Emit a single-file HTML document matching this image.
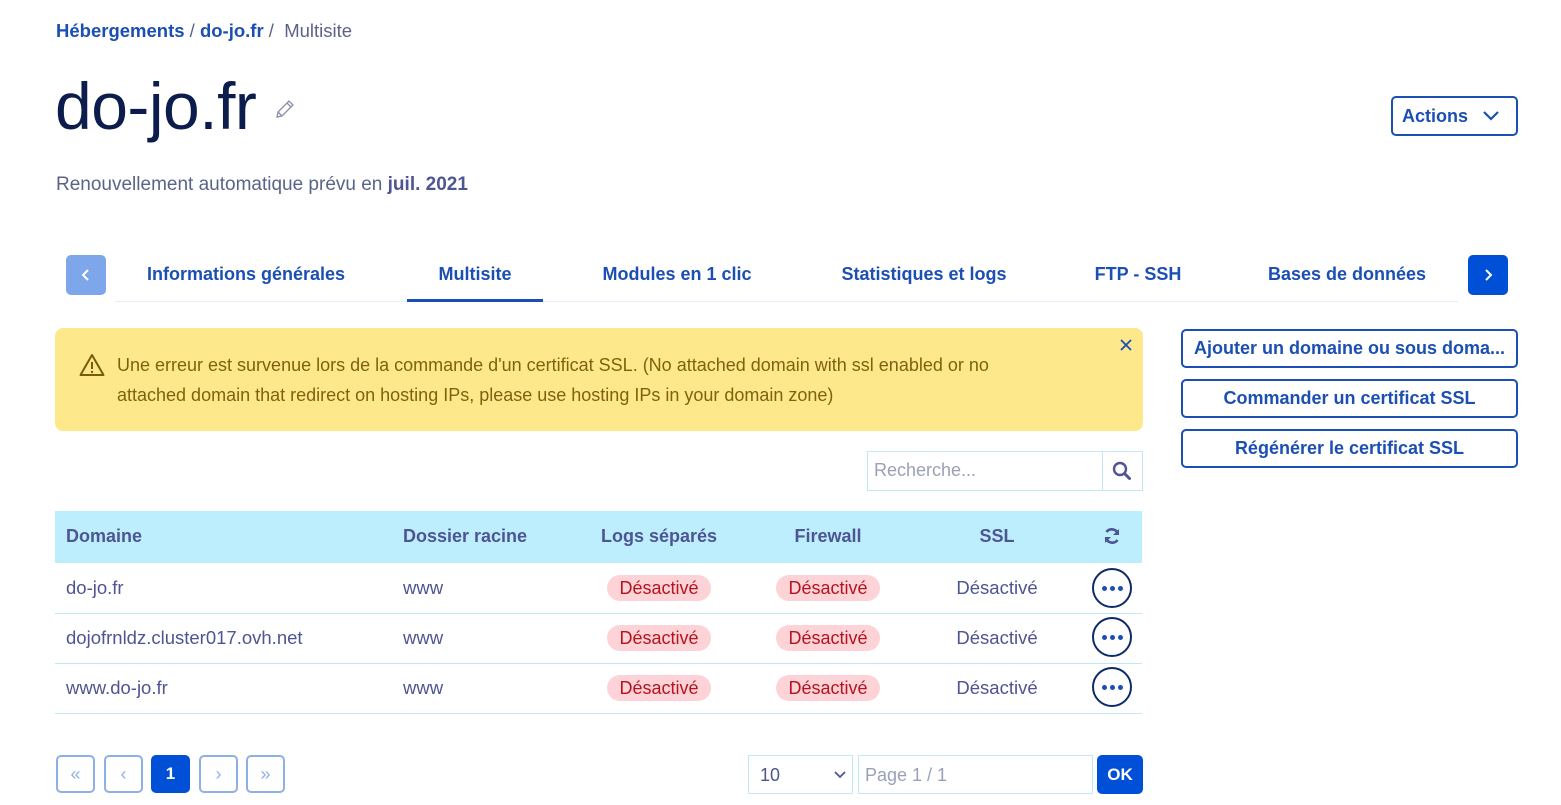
<!DOCTYPE html>
<html><head><meta charset="utf-8"><style>
*{box-sizing:border-box;margin:0;padding:0}
body{width:1561px;height:805px;overflow:hidden;background:#fff;font-family:"Liberation Sans",sans-serif;position:relative;color:#4d5592}
.a{position:absolute}
.bc{left:56px;top:20px;font-size:18.5px;color:#5a6486}
.bc b{color:#1b4fb4}
.title{left:55px;top:68px;font-size:66px;color:#0c1d4d;letter-spacing:-0.5px}
.ren{left:56px;top:174px;font-size:19px;color:#5a6486}
.ren b{color:#4d5592}
.btn{border:2px solid #1b4fb4;border-radius:5px;color:#1b4fb4;font-weight:bold;font-size:18px;display:flex;align-items:center;justify-content:center;background:#fff;white-space:nowrap}
.tab{top:264px;font-size:18px;font-weight:bold;color:#1b4fb4;text-align:center}
.hdr{font-weight:bold;font-size:18px;color:#4d5592;top:526px}
.cell{font-size:18.5px;color:#4d5592}
.badge{background:#fdd3d8;color:#b5141e;border-radius:13px;width:104px;height:26px;font-size:18px;display:flex;align-items:center;justify-content:center}
.row{left:55px;width:1087px;height:1px;background:#c3e8f5}
.dots{width:40px;height:40px;border:2px solid #0d2a6b;border-radius:50%;display:flex;align-items:center;justify-content:center;gap:3px}
.dots i{width:5px;height:5px;border-radius:50%;background:#1b4fb4;display:block}
.pg{top:755px;width:39px;height:38px;border:2px solid #8fb0e6;border-radius:5px;color:#8fb0e6;display:flex;align-items:center;justify-content:center;font-size:18px}
</style></head><body>
<div class="a bc"><b>Hébergements</b> / <b>do-jo.fr</b> /&nbsp; Multisite</div>
<div class="a title">do-jo.fr</div>
<svg class="a" style="left:274px;top:98px" width="22" height="22" viewBox="0 0 22 22"><path d="M3 19l1-5L15 3l4 4L8 18z M4 14l4 4 M13 5l4 4" fill="none" stroke="#8a8fa8" stroke-width="1.3"/></svg>
<div class="a ren">Renouvellement automatique prévu en <b>juil. 2021</b></div>
<div class="a btn" style="left:1391px;top:96px;width:127px;height:40px;justify-content:flex-start;padding-left:9px">Actions<svg style="margin-left:14px" width="18" height="12" viewBox="0 0 18 12"><path d="M2 2l7 7 7-7" fill="none" stroke="#1b4fb4" stroke-width="2.2"/></svg></div>

<div class="a" style="left:66px;top:255px;width:40px;height:40px;background:#7ea6ea;border-radius:5px;display:flex;align-items:center;justify-content:center"><svg width="10" height="14"><path d="M7 2L2 7l5 5" fill="none" stroke="#fff" stroke-width="2"/></svg></div>
<div class="a" style="left:1468px;top:255px;width:40px;height:40px;background:#0050d7;border-radius:5px;display:flex;align-items:center;justify-content:center"><svg width="10" height="14"><path d="M3 2l5 5-5 5" fill="none" stroke="#fff" stroke-width="2"/></svg></div>
<div class="a" style="left:115px;top:301px;width:1343px;height:1px;background:#e3eef8"></div>
<div class="a" style="left:407px;top:299px;width:136px;height:3px;background:#1b4fb4"></div>
<div class="a tab" style="left:106px;width:280px">Informations générales</div>
<div class="a tab" style="left:407px;width:136px">Multisite</div>
<div class="a tab" style="left:567px;width:220px">Modules en 1 clic</div>
<div class="a tab" style="left:804px;width:240px">Statistiques et logs</div>
<div class="a tab" style="left:1068px;width:140px">FTP - SSH</div>
<div class="a tab" style="left:1237px;width:220px">Bases de données</div>

<div class="a" style="left:55px;top:328px;width:1088px;height:103px;background:#fde88b;border-radius:8px"></div>
<svg class="a" style="left:79px;top:353px" width="26" height="24" viewBox="0 0 26 24"><path d="M13 2L1.5 22h23z" fill="none" stroke="#7a5b0a" stroke-width="2" stroke-linejoin="round"/><path d="M13 9v7" stroke="#7a5b0a" stroke-width="2"/><circle cx="13" cy="19" r="1.2" fill="#7a5b0a"/></svg>
<div class="a" style="left:117px;top:350px;width:935px;font-size:18px;line-height:30px;color:#7f620e">Une erreur est survenue lors de la commande d'un certificat SSL. (No attached domain with ssl enabled or no attached domain that redirect on hosting IPs, please use hosting IPs in your domain zone)</div>
<svg class="a" style="left:1120px;top:339px" width="12" height="12"><path d="M1 1l10 10M11 1L1 11" stroke="#1b4fb4" stroke-width="1.8"/></svg>

<div class="a btn" style="left:1181px;top:329px;width:337px;height:39px">Ajouter un domaine ou sous doma...</div>
<div class="a btn" style="left:1181px;top:379px;width:337px;height:39px">Commander un certificat SSL</div>
<div class="a btn" style="left:1181px;top:429px;width:337px;height:39px">Régénérer le certificat SSL</div>

<div class="a" style="left:867px;top:451px;width:276px;height:40px;border:1px solid #c3e8f5"></div>
<div class="a" style="left:1102px;top:451px;width:1px;height:40px;background:#c3e8f5"></div>
<div class="a" style="left:874px;top:460px;font-size:18px;color:#9aa0b8">Recherche...</div>
<svg class="a" style="left:1112px;top:461px" width="20" height="20"><circle cx="8" cy="8" r="6" fill="none" stroke="#4d5592" stroke-width="2.4"/><path d="M12.5 12.5l5 5" stroke="#4d5592" stroke-width="3" stroke-linecap="round"/></svg>

<div class="a" style="left:55px;top:511px;width:1087px;height:52px;background:#bdeefe"></div>
<div class="a hdr" style="left:66px">Domaine</div>
<div class="a hdr" style="left:403px">Dossier racine</div>
<div class="a hdr" style="left:569px;width:180px;text-align:center">Logs séparés</div>
<div class="a hdr" style="left:748px;width:160px;text-align:center">Firewall</div>
<div class="a hdr" style="left:917px;width:160px;text-align:center">SSL</div>
<svg class="a" style="left:1103px;top:527px" width="18" height="18" viewBox="0 0 18 18"><path d="M15 7A6.5 6.5 0 0 0 3.5 5" fill="none" stroke="#4d5592" stroke-width="2.6"/><path d="M3 11a6.5 6.5 0 0 0 11.5 2" fill="none" stroke="#4d5592" stroke-width="2.6"/><path d="M16 2v6h-6z" fill="#4d5592"/><path d="M2 16v-6h6z" fill="#4d5592"/></svg>

<div class="a row" style="top:613px"></div>
<div class="a row" style="top:663px"></div>
<div class="a row" style="top:713px"></div>

<div class="a cell" style="left:66px;top:577px">do-jo.fr</div>
<div class="a cell" style="left:66px;top:627px">dojofrnldz.cluster017.ovh.net</div>
<div class="a cell" style="left:66px;top:677px">www.do-jo.fr</div>
<div class="a cell" style="left:403px;top:577px">www</div>
<div class="a cell" style="left:403px;top:627px">www</div>
<div class="a cell" style="left:403px;top:677px">www</div>

<div class="a badge" style="left:607px;top:575px">Désactivé</div>
<div class="a badge" style="left:776px;top:575px">Désactivé</div>
<div class="a badge" style="left:607px;top:625px">Désactivé</div>
<div class="a badge" style="left:776px;top:625px">Désactivé</div>
<div class="a badge" style="left:607px;top:675px">Désactivé</div>
<div class="a badge" style="left:776px;top:675px">Désactivé</div>
<div class="a cell" style="left:917px;width:160px;text-align:center;top:577px">Désactivé</div>
<div class="a cell" style="left:917px;width:160px;text-align:center;top:627px">Désactivé</div>
<div class="a cell" style="left:917px;width:160px;text-align:center;top:677px">Désactivé</div>
<div class="a dots" style="left:1092px;top:568px"><i></i><i></i><i></i></div>
<div class="a dots" style="left:1092px;top:617px"><i></i><i></i><i></i></div>
<div class="a dots" style="left:1092px;top:667px"><i></i><i></i><i></i></div>

<div class="a pg" style="left:56px">«</div>
<div class="a pg" style="left:104px">‹</div>
<div class="a pg" style="left:151px;background:#0050d7;border-color:#0050d7;color:#fff;font-weight:bold;font-size:17px">1</div>
<div class="a pg" style="left:199px">›</div>
<div class="a pg" style="left:246px">»</div>

<div class="a" style="left:748px;top:755px;width:105px;height:39px;border:1px solid #c3e8f5;font-size:18px;color:#4d5592;padding:9px 0 0 11px">10<svg style="position:absolute;right:6px;top:15px" width="12" height="8"><path d="M1 1l5 5 5-5" fill="none" stroke="#4d5592" stroke-width="1.8"/></svg></div>
<div class="a" style="left:858px;top:755px;width:235px;height:39px;border:1px solid #c3e8f5;font-size:18px;color:#9aa0b8;padding:9px 0 0 6px">Page 1 / 1</div>
<div class="a" style="left:1097px;top:755px;width:46px;height:39px;background:#0050d7;border-radius:5px;color:#fff;font-weight:bold;font-size:17px;display:flex;align-items:center;justify-content:center">OK</div>
</body></html>
